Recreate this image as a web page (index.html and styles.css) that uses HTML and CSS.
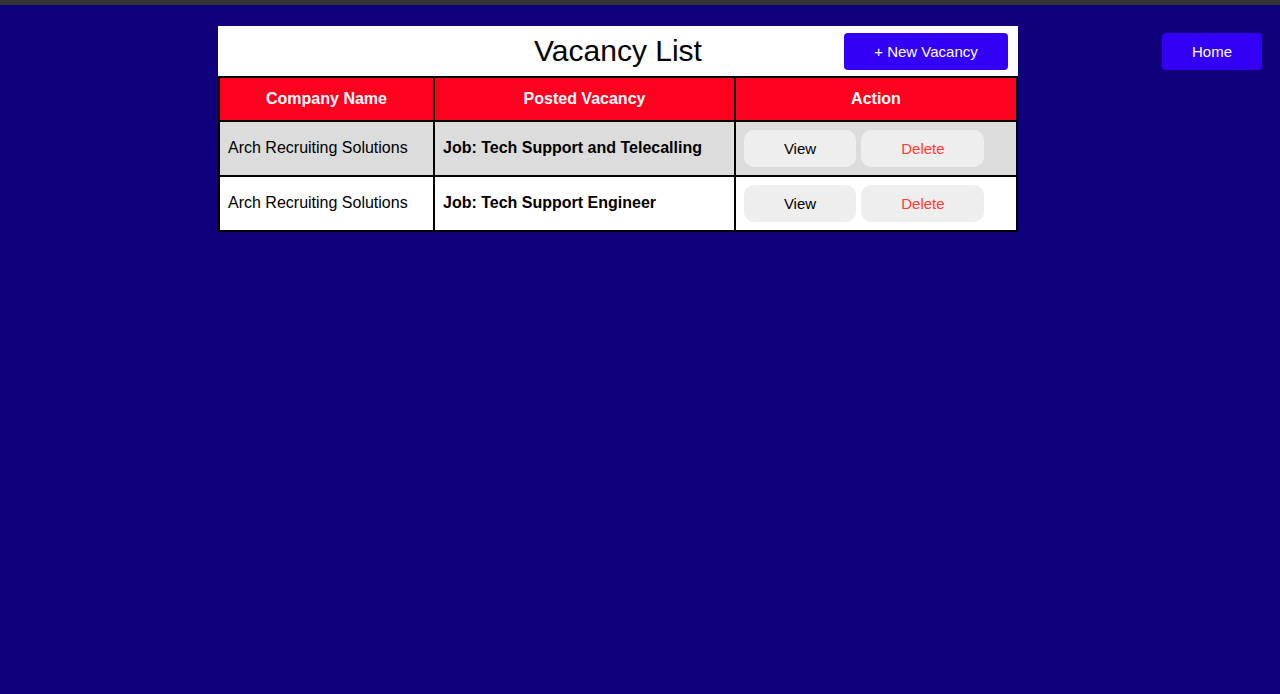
FILE: index.html
```html
<!DOCTYPE html>
<html lang="en">
<head>
  <meta charset="UTF-8">
  <title>Vacancy List</title>
  <link rel="stylesheet" href="styles.css">
</head>
<body>

  <div class="top-strip"></div>

  <div class="page">
    <div class="vacancies">
      <div class="vacancies-header">
        <span></span>
        <h1>Vacancy List</h1>
        <button class="btn-blue btn-new">+ New Vacancy</button>
      </div>

      <table>
        <thead>
          <tr>
            <th class="col-company">Company Name</th>
            <th class="col-job">Posted Vacancy</th>
            <th class="col-action">Action</th>
          </tr>
        </thead>
        <tbody>
          <tr class="row-gray">
            <td>Arch Recruiting Solutions</td>
            <td class="job">Job: Tech Support and Telecalling</td>
            <td>
              <button class="btn-view">View</button>
              <button class="btn-delete">Delete</button>
            </td>
          </tr>
          <tr>
            <td>Arch Recruiting Solutions</td>
            <td class="job">Job: Tech Support Engineer</td>
            <td>
              <button class="btn-view">View</button>
              <button class="btn-delete">Delete</button>
            </td>
          </tr>
        </tbody>
      </table>
    </div>

    <button class="btn-blue btn-home">Home</button>
  </div>

</body>
</html>
```

FILE: styles.css
```css
* {
  box-sizing: border-box;
}

html, body {
  height: 100%;
}

body {
  margin: 0;
  font-family: 'Liberation Sans', Arial, sans-serif;
  background: #10007a;
  color: #000;
}

.top-strip {
  height: 5px;
  background: #333;
}

.page {
  display: flex;
  justify-content: space-between;
  align-items: flex-start;
  padding: 21px 18px 0 218px;
}

.vacancies {
  width: 800px;
}

.vacancies-header {
  background: white;
  height: 50px;
  display: grid;
  grid-template-columns: 1fr auto 1fr;
  align-items: center;
  padding-right: 10px;
}

.vacancies-header h1 {
  margin: 0;
  font-size: 30px;
  font-weight: normal;
  padding-left: 10px;
}

.btn-blue {
  background: #3300f5;
  color: white;
  border: none;
  border-radius: 4px;
  height: 37px;
  font-family: inherit;
  font-size: 15px;
  cursor: pointer;
}

.btn-new {
  justify-self: end;
  width: 164px;
}

.btn-home {
  width: 100px;
  margin-top: 7px;
}

table {
  width: 800px;
  border-collapse: collapse;
  font-size: 16px;
}

th, td {
  border: 2px solid black;
  padding: 0 8px 1px;
  text-align: left;
}

th {
  background: #ff001e;
  color: white;
  text-align: center;
  height: 44px;
}

td {
  background: white;
  height: 55px;
}

.row-gray td {
  background: #dcdcdc;
}

.col-company {
  width: 215px;
}

.col-job {
  width: 301px;
}

.job {
  font-weight: bold;
}

.btn-view, .btn-delete {
  background: #eeeeee;
  border: none;
  border-radius: 10px;
  height: 37px;
  font-family: inherit;
  font-size: 15px;
  vertical-align: middle;
  cursor: pointer;
}

.btn-view {
  width: 112px;
  margin-right: 1px;
  color: #000;
}

.btn-delete {
  width: 123px;
  color: #ff3b30;
}
```
